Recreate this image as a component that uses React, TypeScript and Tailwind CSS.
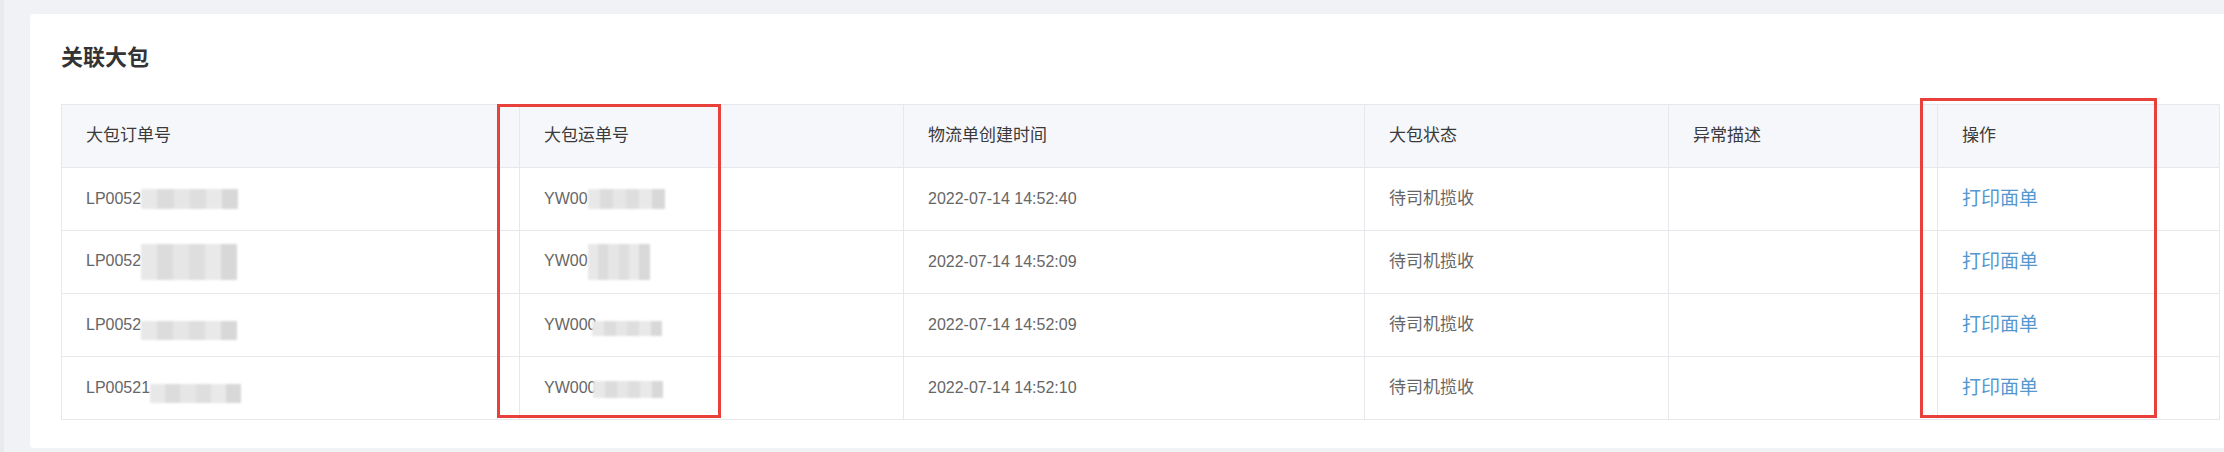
import React from "react";

type Row = {
  order: string;
  orderMask: { w: number; h: number; dy: number; dx: number };
  waybill: string;
  waybillMask: { w: number; h: number; dy: number; dx: number };
  time: string;
  status: string;
};

const rows: Row[] = [
  {
    order: "LP0052",
    orderMask: { w: 97, h: 20, dy: -1, dx: 0 },
    waybill: "YW00",
    waybillMask: { w: 77, h: 20, dy: -1, dx: 0 },
    time: "2022-07-14 14:52:40",
    status: "待司机揽收",
  },
  {
    order: "LP0052",
    orderMask: { w: 96, h: 36, dy: 0, dx: 0 },
    waybill: "YW00",
    waybillMask: { w: 62, h: 36, dy: 0, dx: 0 },
    time: "2022-07-14 14:52:09",
    status: "待司机揽收",
  },
  {
    order: "LP0052",
    orderMask: { w: 96, h: 19, dy: 5, dx: 0 },
    waybill: "YW000",
    waybillMask: { w: 70, h: 15, dy: 3, dx: -4 },
    time: "2022-07-14 14:52:09",
    status: "待司机揽收",
  },
  {
    order: "LP00521",
    orderMask: { w: 91, h: 19, dy: 5, dx: 0 },
    waybill: "YW000",
    waybillMask: { w: 70, h: 17, dy: 1, dx: -3 },
    time: "2022-07-14 14:52:10",
    status: "待司机揽收",
  },
];

const cjk = "font-['Liberation_Sans','Noto_Sans_CJK_SC',sans-serif]";

function Mask({ m }: { m: Row["orderMask"] }) {
  return (
    <span
      className="relative inline-flex overflow-hidden align-middle blur-[0.8px]"
      style={{ width: m.w, height: m.h, top: m.dy, marginLeft: m.dx }}
    >
      <span className="h-full flex-1 bg-[#e8e8e8]" />
      <span className="h-full flex-1 bg-[#dcdcdc]" />
      <span className="h-full flex-1 bg-[#e6e6e6]" />
      <span className="h-full flex-1 bg-[#dedede]" />
      <span className="h-full flex-1 bg-[#e9e9e9]" />
      <span className="h-full flex-1 bg-[#d8d8d8]" />
    </span>
  );
}

export default function App() {
  const th = "h-[63px] border border-[#e6e8ec] px-[24px] text-left align-middle text-[17px] font-normal text-[#3a3a3a]";
  const td = "h-[63px] border border-[#e6e8ec] px-[24px] align-middle text-[#666]";

  return (
    <div className={`flex h-[452px] w-[2224px] overflow-hidden bg-[#f0f2f5] ${cjk}`}>
      <div className="h-full w-[4px] shrink-0 bg-[#e8eaee]" />
      <div className="ml-[26px] mt-[14px] h-[434px] w-[2230px] shrink-0">
        <div className="relative h-full w-full rounded-[4px] bg-white px-[31px] pt-[29px]">
          <h2 className="text-[22px] leading-[30px] font-semibold text-[#333]">关联大包</h2>

          <table className="mt-[31px] w-[2158px] table-fixed border-collapse">
            <colgroup>
              <col className="w-[458px]" />
              <col className="w-[384px]" />
              <col className="w-[461px]" />
              <col className="w-[304px]" />
              <col className="w-[269px]" />
              <col className="w-[282px]" />
            </colgroup>
            <thead>
              <tr className="bg-[#f5f7fa]">
                <th className={th}>大包订单号</th>
                <th className={th}>大包运单号</th>
                <th className={th}>物流单创建时间</th>
                <th className={th}>大包状态</th>
                <th className={th}>异常描述</th>
                <th className={th}>操作</th>
              </tr>
            </thead>
            <tbody>
              {rows.map((r, i) => (
                <tr key={i}>
                  <td className={`${td} text-[16px]`}>
                    {r.order}
                    <Mask m={r.orderMask} />
                  </td>
                  <td className={`${td} text-[16px]`}>
                    {r.waybill}
                    <Mask m={r.waybillMask} />
                  </td>
                  <td className={`${td} text-[16px]`}>{r.time}</td>
                  <td className={`${td} text-[17px]`}>{r.status}</td>
                  <td className={td}></td>
                  <td className={td}>
                    <a className="cursor-pointer text-[19px] text-[#5597cf]">打印面单</a>
                  </td>
                </tr>
              ))}
            </tbody>
          </table>

          {/* annotation boxes */}
          <div className="pointer-events-none absolute left-[467px] top-[90px] h-[314px] w-[224px] border-[3px] border-[#e8413b]" />
          <div className="pointer-events-none absolute left-[1890px] top-[84px] h-[320px] w-[237px] border-[3px] border-[#e8413b]" />
        </div>
      </div>
    </div>
  );
}
